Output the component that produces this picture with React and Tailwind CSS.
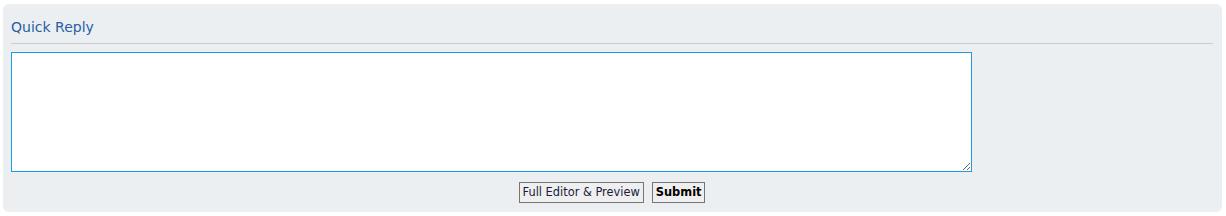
export default function App() {
  return (
    <div className="h-[216px] w-[1226px] bg-white pl-[3px] pt-[4px]" style={{ fontFamily: '"DejaVu Sans", Verdana, sans-serif' }}>
      <div className="h-[208px] w-[1219px] rounded-[6px] bg-[#ebeff2] px-[8px] pr-[9px]">
        <div className="flex h-[40px] items-end border-b border-[#c8ccd0] pb-[9px]">
          <h3 className="text-[14px] leading-none text-[#2a5da3]">Quick Reply</h3>
        </div>
        <textarea className="mt-[8px] block h-[120px] w-[961px] resize-y border border-[#1e9ae0] bg-white outline-none" />
        <div className="mt-[10px] flex justify-center gap-[8px]">
          <button className="h-[21px] border border-[#767676] bg-[#efefef] px-[3px] text-[11.4px] leading-none text-[#1a1a40]">Full Editor &amp; Preview</button>
          <button className="h-[21px] border border-[#767676] bg-[#efefef] px-[3px] text-[11.4px] font-bold leading-none text-black">Submit</button>
        </div>
      </div>
    </div>
  )
}
